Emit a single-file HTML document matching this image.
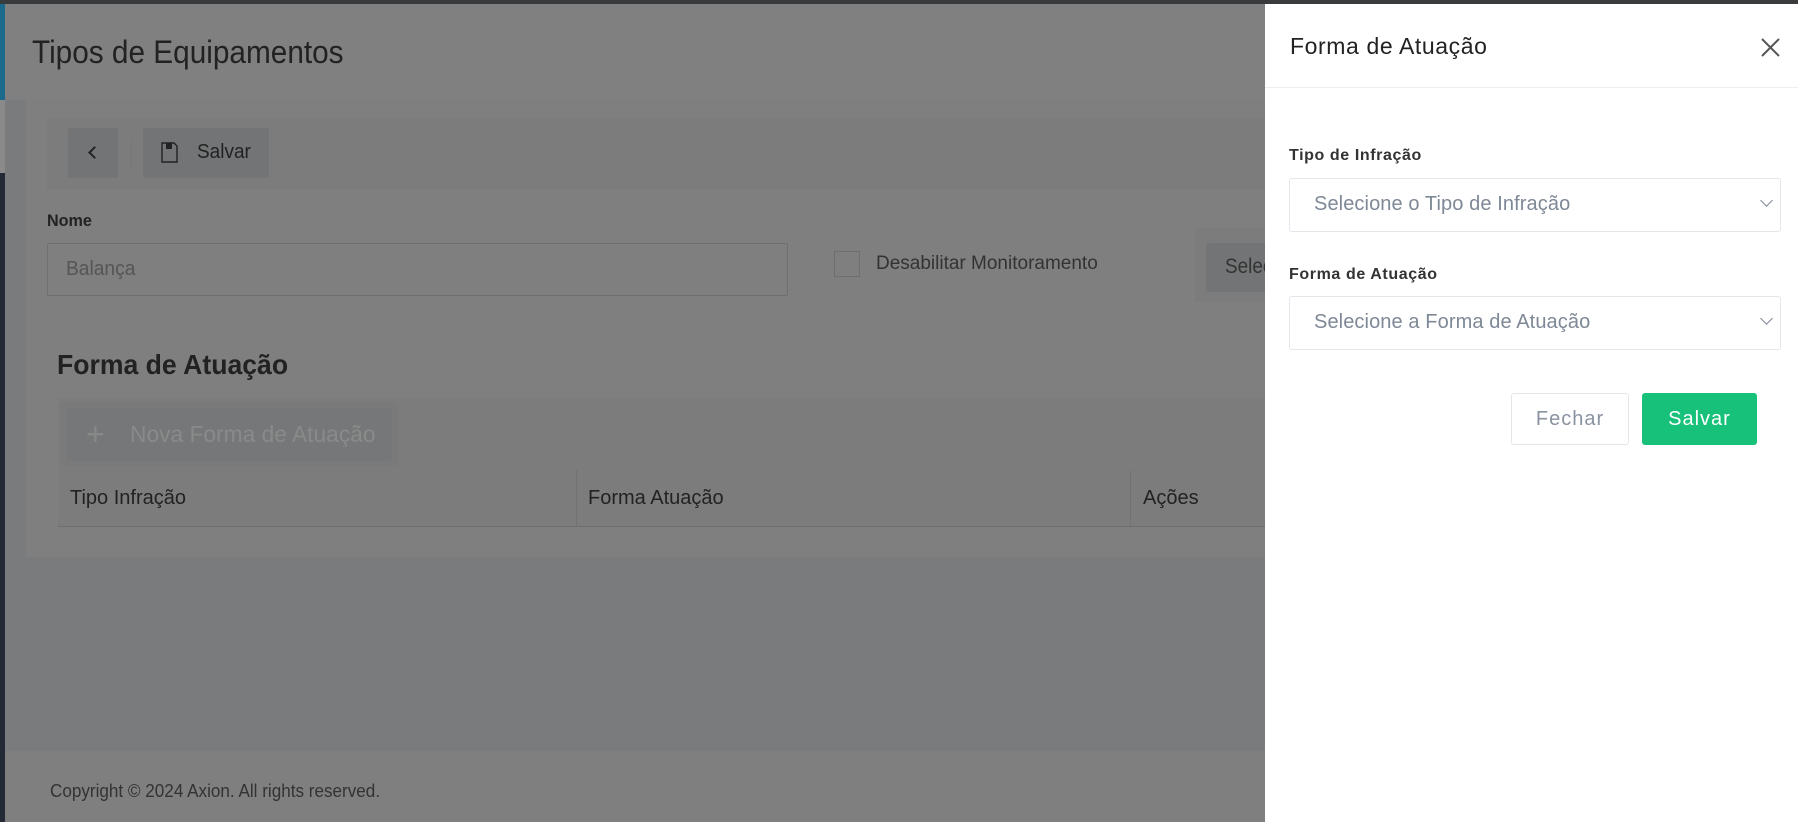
<!DOCTYPE html>
<html><head><meta charset="utf-8"><style>
*{box-sizing:border-box;margin:0;padding:0}
body{width:1798px;height:822px;overflow:hidden;position:relative;background:#7a7b7d;font-family:"Liberation Sans",sans-serif;}
.abs{position:absolute;white-space:nowrap}
</style></head><body>
<div class="abs" style="left:0;top:0;width:1798px;height:4px;background:#3a3b3c"></div>
<div class="abs" style="left:0;top:4px;width:1265px;height:96px;background:#808080"></div>
<div class="abs" style="left:0;top:4px;width:5px;height:96px;background:#1b6a8c"></div>
<div class="abs" style="left:0;top:100px;width:5px;height:73px;background:#8a8a8a"></div>
<div class="abs" style="left:0;top:173px;width:5px;height:649px;background:#232a35"></div>
<div class="abs" style="left:32px;top:34px;font-size:32px;color:#222;transform:scaleX(.93);transform-origin:left">Tipos de Equipamentos</div>
<div class="abs" style="left:26px;top:100px;width:1252px;height:457px;background:#7f7f7f"></div>
<div class="abs" style="left:47px;top:118px;width:1231px;height:71px;background:#7c7c7c"></div>
<div class="abs" style="left:68px;top:128px;width:50px;height:50px;background:#737475;border-radius:2px"></div>
<div class="abs" style="left:90px;top:148px;width:9px;height:9px;border-left:2px solid #222;border-bottom:2px solid #222;transform:rotate(45deg)"></div>
<div class="abs" style="left:131px;top:138px;width:1px;height:30px;background:#777"></div>
<div class="abs" style="left:143px;top:128px;width:126px;height:50px;background:#737475;border-radius:2px"></div>
<svg class="abs" style="left:161px;top:142px" width="17" height="21" viewBox="0 0 17 21"><path d="M1 1h12l3 3v16H1z" fill="none" stroke="#222" stroke-width="1.4"/><rect x="5" y="1" width="6" height="6" fill="#222"/></svg>
<div class="abs" style="left:197px;top:141px;font-size:20px;color:#222;transform:scaleX(.95);transform-origin:left">Salvar</div>
<div class="abs" style="left:47px;top:211px;font-size:17px;font-weight:bold;color:#222;transform:scaleX(.95);transform-origin:left">Nome</div>
<div class="abs" style="left:47px;top:243px;width:741px;height:53px;border:1px solid #6f6f6f;border-radius:2px"></div>
<div class="abs" style="left:66px;top:258px;font-size:20px;color:#555;transform:scaleX(.96);transform-origin:left">Balança</div>
<div class="abs" style="left:834px;top:251px;width:26px;height:26px;border:1px solid #6f6f6f"></div>
<div class="abs" style="left:876px;top:253px;font-size:19px;color:#333">Desabilitar Monitoramento</div>
<div class="abs" style="left:1195px;top:228px;width:80px;height:74px;background:#7c7c7c"></div>
<div class="abs" style="left:1206px;top:243px;width:70px;height:49px;background:#737475;border-radius:3px"></div>
<div class="abs" style="left:1225px;top:255px;font-size:21px;color:#333;transform:scaleX(.9);transform-origin:left">Selecionar</div>
<div class="abs" style="left:57px;top:349px;font-size:28px;font-weight:bold;color:#222;transform:scaleX(.95);transform-origin:left">Forma de Atuação</div>
<div class="abs" style="left:58px;top:398px;width:1215px;height:128px;background:#7c7c7c"></div>
<div class="abs" style="left:60px;top:402px;width:339px;height:64px;background:#7a7a7b;border-radius:5px"></div>
<div class="abs" style="left:66px;top:408px;width:326px;height:53px;background:#767778;border-radius:3px"></div>
<div class="abs" style="left:86px;top:416px;font-size:32px;color:#888;font-weight:100">+</div>
<div class="abs" style="left:130px;top:421px;font-size:23px;color:#8a8a8a;transform:scaleX(.99);transform-origin:left">Nova Forma de Atuação</div>
<div class="abs" style="left:58px;top:526px;width:1215px;height:1px;background:#6e6e6e"></div>
<div class="abs" style="left:576px;top:470px;width:1px;height:56px;background:#727272"></div>
<div class="abs" style="left:1130px;top:470px;width:1px;height:56px;background:#727272"></div>
<div class="abs" style="left:70px;top:487px;font-size:20px;color:#222">Tipo Infração</div>
<div class="abs" style="left:588px;top:487px;font-size:20px;color:#222">Forma Atuação</div>
<div class="abs" style="left:1143px;top:487px;font-size:20px;color:#222">Ações</div>
<div class="abs" style="left:5px;top:751px;width:1260px;height:71px;background:#7f7f7f"></div>
<div class="abs" style="left:50px;top:781px;font-size:18px;color:#333;transform:scaleX(.95);transform-origin:left">Copyright © 2024 Axion. All rights reserved.</div>
<div class="abs" style="left:1265px;top:4px;width:533px;height:818px;background:#fff"></div>
<div class="abs" style="left:1265px;top:87px;width:533px;height:1px;background:#eceef0"></div>
<div class="abs" style="left:1290px;top:33px;font-size:23px;color:#222;letter-spacing:.6px">Forma de Atuação</div>
<svg class="abs" style="left:1761px;top:38px" width="19" height="19" viewBox="0 0 19 19"><path d="M1 1L18 18M18 1L1 18" stroke="#555" stroke-width="2"/></svg>
<div class="abs" style="left:1289px;top:147px;font-size:16px;font-weight:bold;color:#333;letter-spacing:.6px">Tipo de Infração</div>
<div class="abs" style="left:1289px;top:178px;width:492px;height:54px;border:1px solid #e3e6ea;border-radius:3px"></div>
<div class="abs" style="left:1314px;top:193px;font-size:20px;color:#7e8896;letter-spacing:.1px">Selecione o Tipo de Infração</div>
<div class="abs" style="left:1762px;top:196px;width:9px;height:9px;border-right:1.6px solid #7e8896;border-bottom:1.6px solid #7e8896;transform:rotate(45deg)"></div>
<div class="abs" style="left:1289px;top:266px;font-size:16px;font-weight:bold;color:#333;letter-spacing:.6px">Forma de Atuação</div>
<div class="abs" style="left:1289px;top:296px;width:492px;height:54px;border:1px solid #e3e6ea;border-radius:3px"></div>
<div class="abs" style="left:1314px;top:311px;font-size:20px;color:#7e8896;letter-spacing:.1px">Selecione a Forma de Atuação</div>
<div class="abs" style="left:1762px;top:314px;width:9px;height:9px;border-right:1.6px solid #7e8896;border-bottom:1.6px solid #7e8896;transform:rotate(45deg)"></div>
<div class="abs" style="left:1511px;top:393px;width:118px;height:52px;border:1px solid #e3e6ea;border-radius:3px;font-size:20px;color:#8a93a0;text-align:center;line-height:50px;letter-spacing:1px">Fechar</div>
<div class="abs" style="left:1642px;top:393px;width:115px;height:52px;background:#18c17a;border-radius:3px;font-size:20px;color:#fff;text-align:center;line-height:52px;letter-spacing:1px">Salvar</div>
</body></html>
